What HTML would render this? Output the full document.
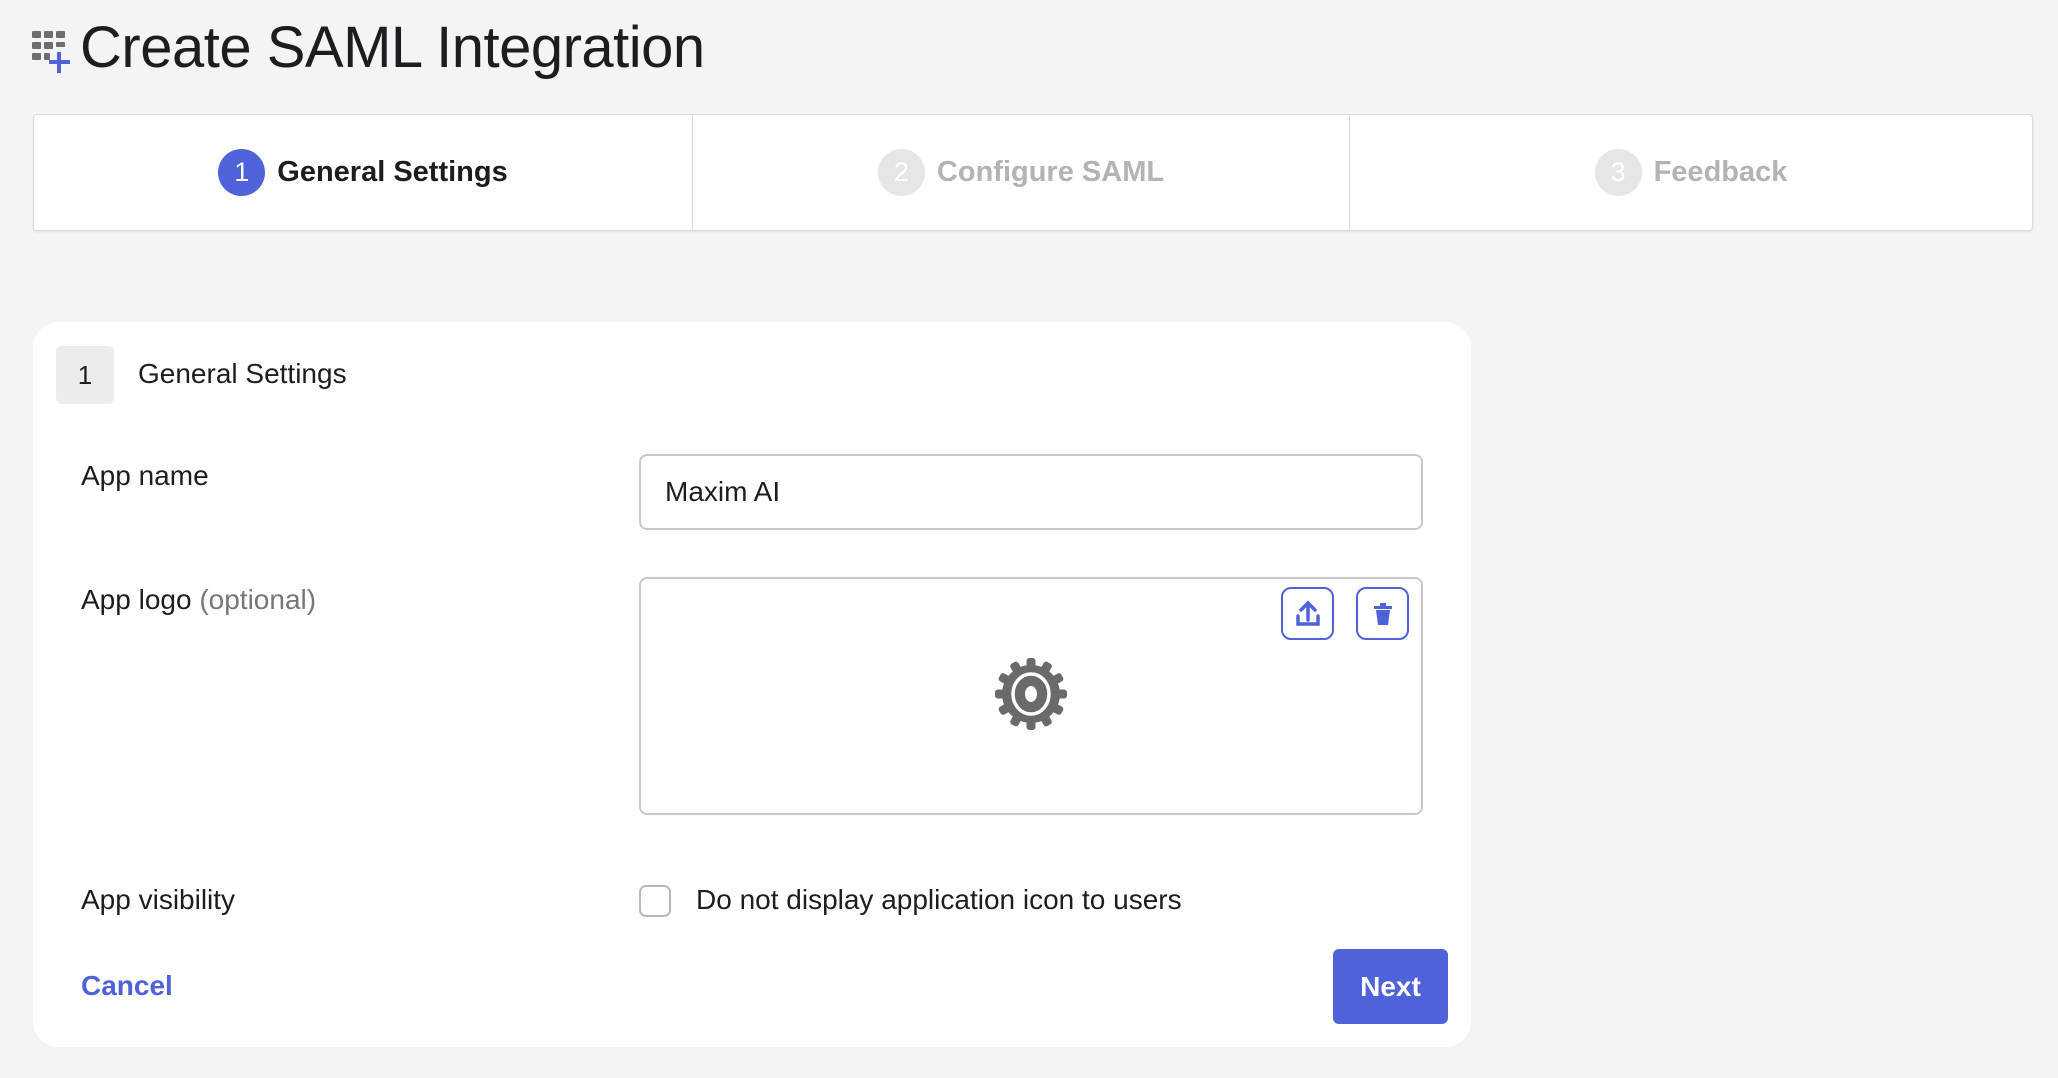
<!DOCTYPE html>
<html><head><style>
body{margin:0;width:2058px;height:1078px;background:#f4f4f4;font-family:"Liberation Sans",sans-serif;color:#1d1d21;position:relative;overflow:hidden}
.a{position:absolute}
.title{left:80px;top:13px;font-size:58px;line-height:70px;color:#1d1d21;letter-spacing:-0.5px}
.steps{left:33px;top:114px;width:1998px;height:115px;background:#fff;border:1px solid #dcdcdc;border-radius:4px;box-shadow:0 1px 2px rgba(0,0,0,.08)}
.div{top:0;width:1px;height:115px;background:#dcdcdc}
.step{top:0;height:115px;display:flex;align-items:center;justify-content:center;font-size:29px;font-weight:bold}
.circ{width:47px;height:47px;border-radius:50%;display:inline-flex;align-items:center;justify-content:center;font-weight:normal;margin-right:12px;font-size:27px}
.card{left:33px;top:322px;width:1438px;height:725px;background:#fff;border-radius:26px}
.lbl{font-size:28px;color:#1d1d21}
.box{border:2px solid #c8c8c8;border-radius:8px;background:#fff}
.ib{width:53px;height:53px;border:2px solid #4f62d8;border-radius:10px;box-sizing:border-box;display:flex;align-items:center;justify-content:center}
</style></head><body>
<svg class="a" style="left:31px;top:30px" width="46" height="46" viewBox="0 0 46 46">
<g fill="#6e6e6e"><rect x="1" y="1" width="9" height="7" rx="1"/><rect x="13" y="1" width="9" height="7" rx="1"/><rect x="25" y="1" width="9" height="7" rx="1"/>
<rect x="1" y="12" width="9" height="7" rx="1"/><rect x="13" y="12" width="9" height="7" rx="1"/><rect x="25" y="12" width="9" height="5" rx="1"/>
<rect x="1" y="23" width="9" height="7" rx="1"/><rect x="13" y="23" width="6" height="7" rx="1"/></g>
<g fill="#4f62d8"><rect x="26" y="22" width="4" height="21"/><rect x="18" y="30" width="21" height="4"/></g></svg>
<div class="a title">Create SAML Integration</div>
<div class="a steps">
<div class="a div" style="left:658px"></div><div class="a div" style="left:1315px"></div>
<div class="a step" style="left:0;width:658px"><span class="circ" style="background:#4f62d8;color:#fff">1</span>General Settings</div>
<div class="a step" style="left:659px;width:656px;color:#b3b3b3"><span class="circ" style="background:#e6e6e6;color:#fff">2</span>Configure SAML</div>
<div class="a step" style="left:1316px;width:682px;color:#b3b3b3"><span class="circ" style="background:#e6e6e6;color:#fff">3</span>Feedback</div>
</div>
<div class="a card">
<div class="a" style="left:23px;top:24px;width:58px;height:58px;background:#ececec;border-radius:6px;display:flex;align-items:center;justify-content:center;font-size:26px">1</div>
<div class="a" style="left:105px;top:36px;font-size:28px">General Settings</div>
<div class="a lbl" style="left:48px;top:138px">App name</div>
<div class="a box" style="left:606px;top:132px;width:780px;height:72px"><div class="a" style="left:24px;top:20px;font-size:28px">Maxim AI</div></div>
<div class="a lbl" style="left:48px;top:262px">App logo <span style="color:#767676">(optional)</span></div>
<div class="a box" style="left:606px;top:255px;width:780px;height:234px">
<div class="a ib" style="left:640px;top:8px"><svg width="26" height="28" viewBox="0 0 26 28"><path d="M13 20V4M6 10l7-7 7 7" stroke="#4f62d8" stroke-width="3.5" fill="none" stroke-linecap="round"/><path d="M3 16v8h20v-8" stroke="#4f62d8" stroke-width="3.5" fill="none" stroke-linecap="round"/></svg></div>
<div class="a ib" style="left:715px;top:8px"><svg width="22" height="26" viewBox="0 0 22 26"><path d="M2 5h18v3H2zM8 2h6v3H8zM4 9h14l-2 15H6z" fill="#4f62d8"/></svg></div>
<svg class="a" style="left:353px;top:78px" width="74" height="74" viewBox="-37 -37 74 74">
<g fill="#6a6a6a">
<circle r="29"/>
<g id="t"><rect x="-4.5" y="-36" width="9" height="10" rx="3"/></g>
<use href="#t" transform="rotate(30)"/><use href="#t" transform="rotate(60)"/><use href="#t" transform="rotate(90)"/><use href="#t" transform="rotate(120)"/><use href="#t" transform="rotate(150)"/><use href="#t" transform="rotate(180)"/><use href="#t" transform="rotate(210)"/><use href="#t" transform="rotate(240)"/><use href="#t" transform="rotate(270)"/><use href="#t" transform="rotate(300)"/><use href="#t" transform="rotate(330)"/>
</g>
<ellipse rx="18" ry="20" fill="none" stroke="#fff" stroke-width="3.5"/><ellipse rx="6" ry="8" fill="#fff"/></svg>
</div>
<div class="a lbl" style="left:48px;top:562px">App visibility</div>
<div class="a" style="left:606px;top:563px;width:28px;height:28px;border:2px solid #b8b8b8;border-radius:7px"></div>
<div class="a lbl" style="left:663px;top:562px">Do not display application icon to users</div>
<div class="a" style="left:48px;top:648px;font-size:28px;font-weight:bold;color:#4f62d8">Cancel</div>
<div class="a" style="left:1300px;top:627px;width:115px;height:75px;background:#4f62d8;border-radius:6px;color:#fff;font-size:28px;font-weight:bold;display:flex;align-items:center;justify-content:center">Next</div>
</div>
</body></html>
